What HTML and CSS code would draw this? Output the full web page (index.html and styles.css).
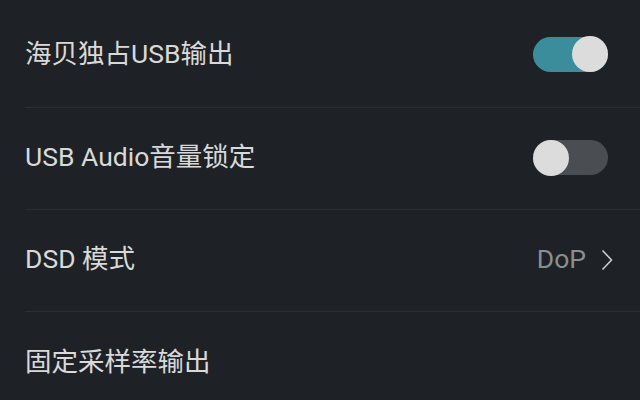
FILE: index.html
```
<!DOCTYPE html>
<html lang="zh">
<head>
<meta charset="utf-8">
<link rel="stylesheet" href="styles.css">
</head>
<body>
<div class="list">
  <div class="row">
    <span class="label">海贝独占USB输出</span>
    <span class="switch on"><span class="thumb"></span></span>
  </div>
  <div class="row">
    <span class="label">USB Audio音量锁定</span>
    <span class="switch off"><span class="thumb"></span></span>
  </div>
  <div class="row">
    <span class="label">DSD 模式</span>
    <span class="value">DoP
      <svg class="chev" width="12" height="22" viewBox="0 0 12 22"><path d="M1.5 1.5 L10.5 11 L1.5 20.5" fill="none" stroke="#c9cbcc" stroke-width="1.6"/></svg>
    </span>
  </div>
  <div class="row last">
    <span class="label">固定采样率输出</span>
  </div>
</div>
</body>
</html>
```
FILE: styles.css
```
html, body {
  margin: 0;
  padding: 0;
  background: #1e2226;
  width: 640px;
  height: 400px;
  overflow: hidden;
}
body {
  font-family: Roboto, "Noto Sans CJK SC", "Noto Sans", sans-serif;
  color: #d9d9d9;
}
.list {
  padding-top: 6px;
  padding-left: 25px;
}
.row {
  box-sizing: border-box;
  height: 102px;
  padding-bottom: 2px;
  border-bottom: 1px solid #2b2f33;
  display: flex;
  align-items: center;
  justify-content: space-between;
  padding-right: 32px;
}
.row:first-child {
  padding-bottom: 5px;
}
.row.last {
  border-bottom: none;
}
.label {
  font-size: 26.5px;
  line-height: 1;
}
.switch {
  width: 75px;
  height: 35px;
  border-radius: 18px;
  display: flex;
  align-items: center;
}
.switch.on {
  background: #3b8d9b;
  justify-content: flex-end;
}
.switch.off {
  background: #4a4e52;
  justify-content: flex-start;
}
.thumb {
  width: 36px;
  height: 36px;
  border-radius: 50%;
  background: #dcdcdd;
}
.value {
  display: flex;
  align-items: center;
  gap: 15px;
  font-size: 26.5px;
  line-height: 1;
  color: #8b8e90;
  margin-right: -5px;
}
.chev {
  display: block;
}
```
